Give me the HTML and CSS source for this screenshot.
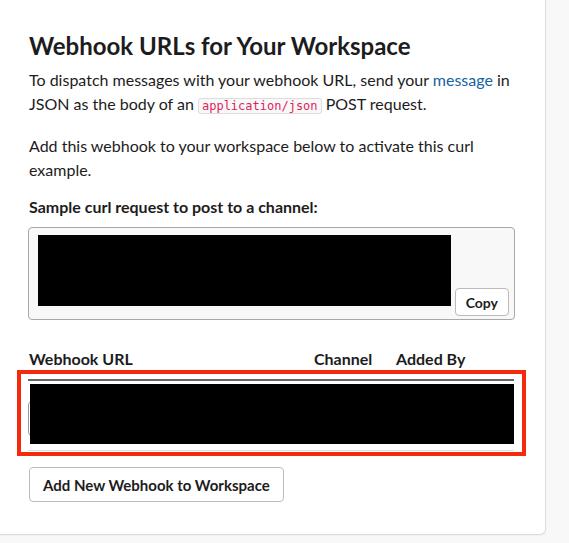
FILE: index.html
```html
<html>
<head><title>Incoming Webhooks</title>
<link rel="stylesheet" href="styles.css">
</head>
<body>
<div class="page">
<div class="card">
	<h2 class="title">Webhook URLs for Your Workspace</h2>
	<p class="text">To dispatch messages with your webhook URL, send your <a href="#">message</a> in JSON as the body of an <code class="inline">application/json</code> POST request.</p>
	<p class="text">Add this webhook to your workspace below to activate this curl example.</p>

	<div class="label">Sample curl request to post to a channel:</div>
	<div class="sample">
		<div class="redact sample-redact"></div>
		<button class="btn copy">Copy</button>
	</div>

	<div class="thead">
		<span class="col-url">Webhook URL</span>
		<span class="col-channel">Channel</span>
		<span class="col-by">Added By</span>
	</div>
	<div class="highlight">
		<div class="rule-dark"></div>
		<div class="row">
			<div class="field"></div>
			<div class="redact row-redact"></div>
		</div>
		<div class="rule-light"></div>
	</div>

	<button class="btn add">Add New Webhook to Workspace</button>
</div>
</div>
</body>
</html>
```

FILE: styles.css
```css
body {
	margin:0px;
	background-color:#f8f8f8;
	font-family: Lato, "Open Sans", sans-serif;
	color:#1d1c1d;
}

.page {
	width:569px;
	height:543px;
}

.card {
	width:484px;
	background-color:#fff;
	padding:0px 32px 32px 29px;
	border-right:1px solid #dcdcdc;
	border-bottom:1px solid #dcdcdc;
	border-bottom-right-radius:6px;
	box-shadow:0px 1px 2px rgba(0,0,0,0.04);
}

.title {
	margin:0px;
	padding-top:30px;
	font-size:24px;
	font-weight:bold;
	line-height:32px;
}

.text {
	margin:6px 0px 18px 0px;
	font-size:16px;
	line-height:24px;
}
.text a {
	color:#1264a3;
	text-decoration:none;
}

.inline {
	font-family: "DejaVu Sans Mono", monospace;
	font-size:12px;
	line-height:16px;
	color:#e01e5a;
	background-color:#f8f8f8;
	border:1px solid #dddddd;
	border-radius:3px;
	padding:0px 3px;
}

.label {
	font-size:16px;
	font-weight:bold;
	line-height:22px;
	margin-top:-4px;
}

.sample {
	position:relative;
	margin-top:9px;
	margin-left:-1px;
	width:485px;
	height:91px;
	padding:0px;
	background-color:#f8f8f8;
	border:1px solid #a8a8a8;
	border-radius:4px;
}

.redact {
	background-color:#000;
}
.sample-redact {
	margin:7px 0px 0px 9px;
	width:413px;
	height:71px;
}

.btn {
	font-family: Lato, "Open Sans", sans-serif;
	font-weight:bold;
	color:#1d1c1d;
	background-color:#fff;
	border:1px solid #bbbbbb;
	border-radius:4px;
	cursor:pointer;
}
.copy {
	position:absolute;
	right:5px;
	bottom:3px;
	height:28px;
	padding:0px 10px;
	font-size:14px;
}

.thead {
	display:flex;
	margin-top:28px;
	font-size:16px;
	font-weight:bold;
	line-height:22px;
}
.col-url { width:285px; }
.col-channel { width:82px; }
.col-by { flex:1; }

.highlight {
	margin:0px -13px 0px -12px;
	border:4px solid #f52a0c;
	padding:5px 8px 1px 7px;
}

.rule-dark {
	height:2px;
	background-color:#666;
}

.row {
	display:grid;
	margin-top:3px;
	height:60px;
}
.field, .row-redact {
	grid-area:1 / 1;
}
.field {
	align-self:center;
	width:300px;
	height:33px;
	margin-top:8px;
	border:1px solid #999;
	border-radius:4px;
}
.row-redact {
	margin-left:2px;
}

.rule-light {
	margin-top:6px;
	height:1px;
	background-color:#dddddd;
}

.add {
	margin-top:11px;
	height:35px;
	padding:0px 13px;
	font-size:15px;
}
```
